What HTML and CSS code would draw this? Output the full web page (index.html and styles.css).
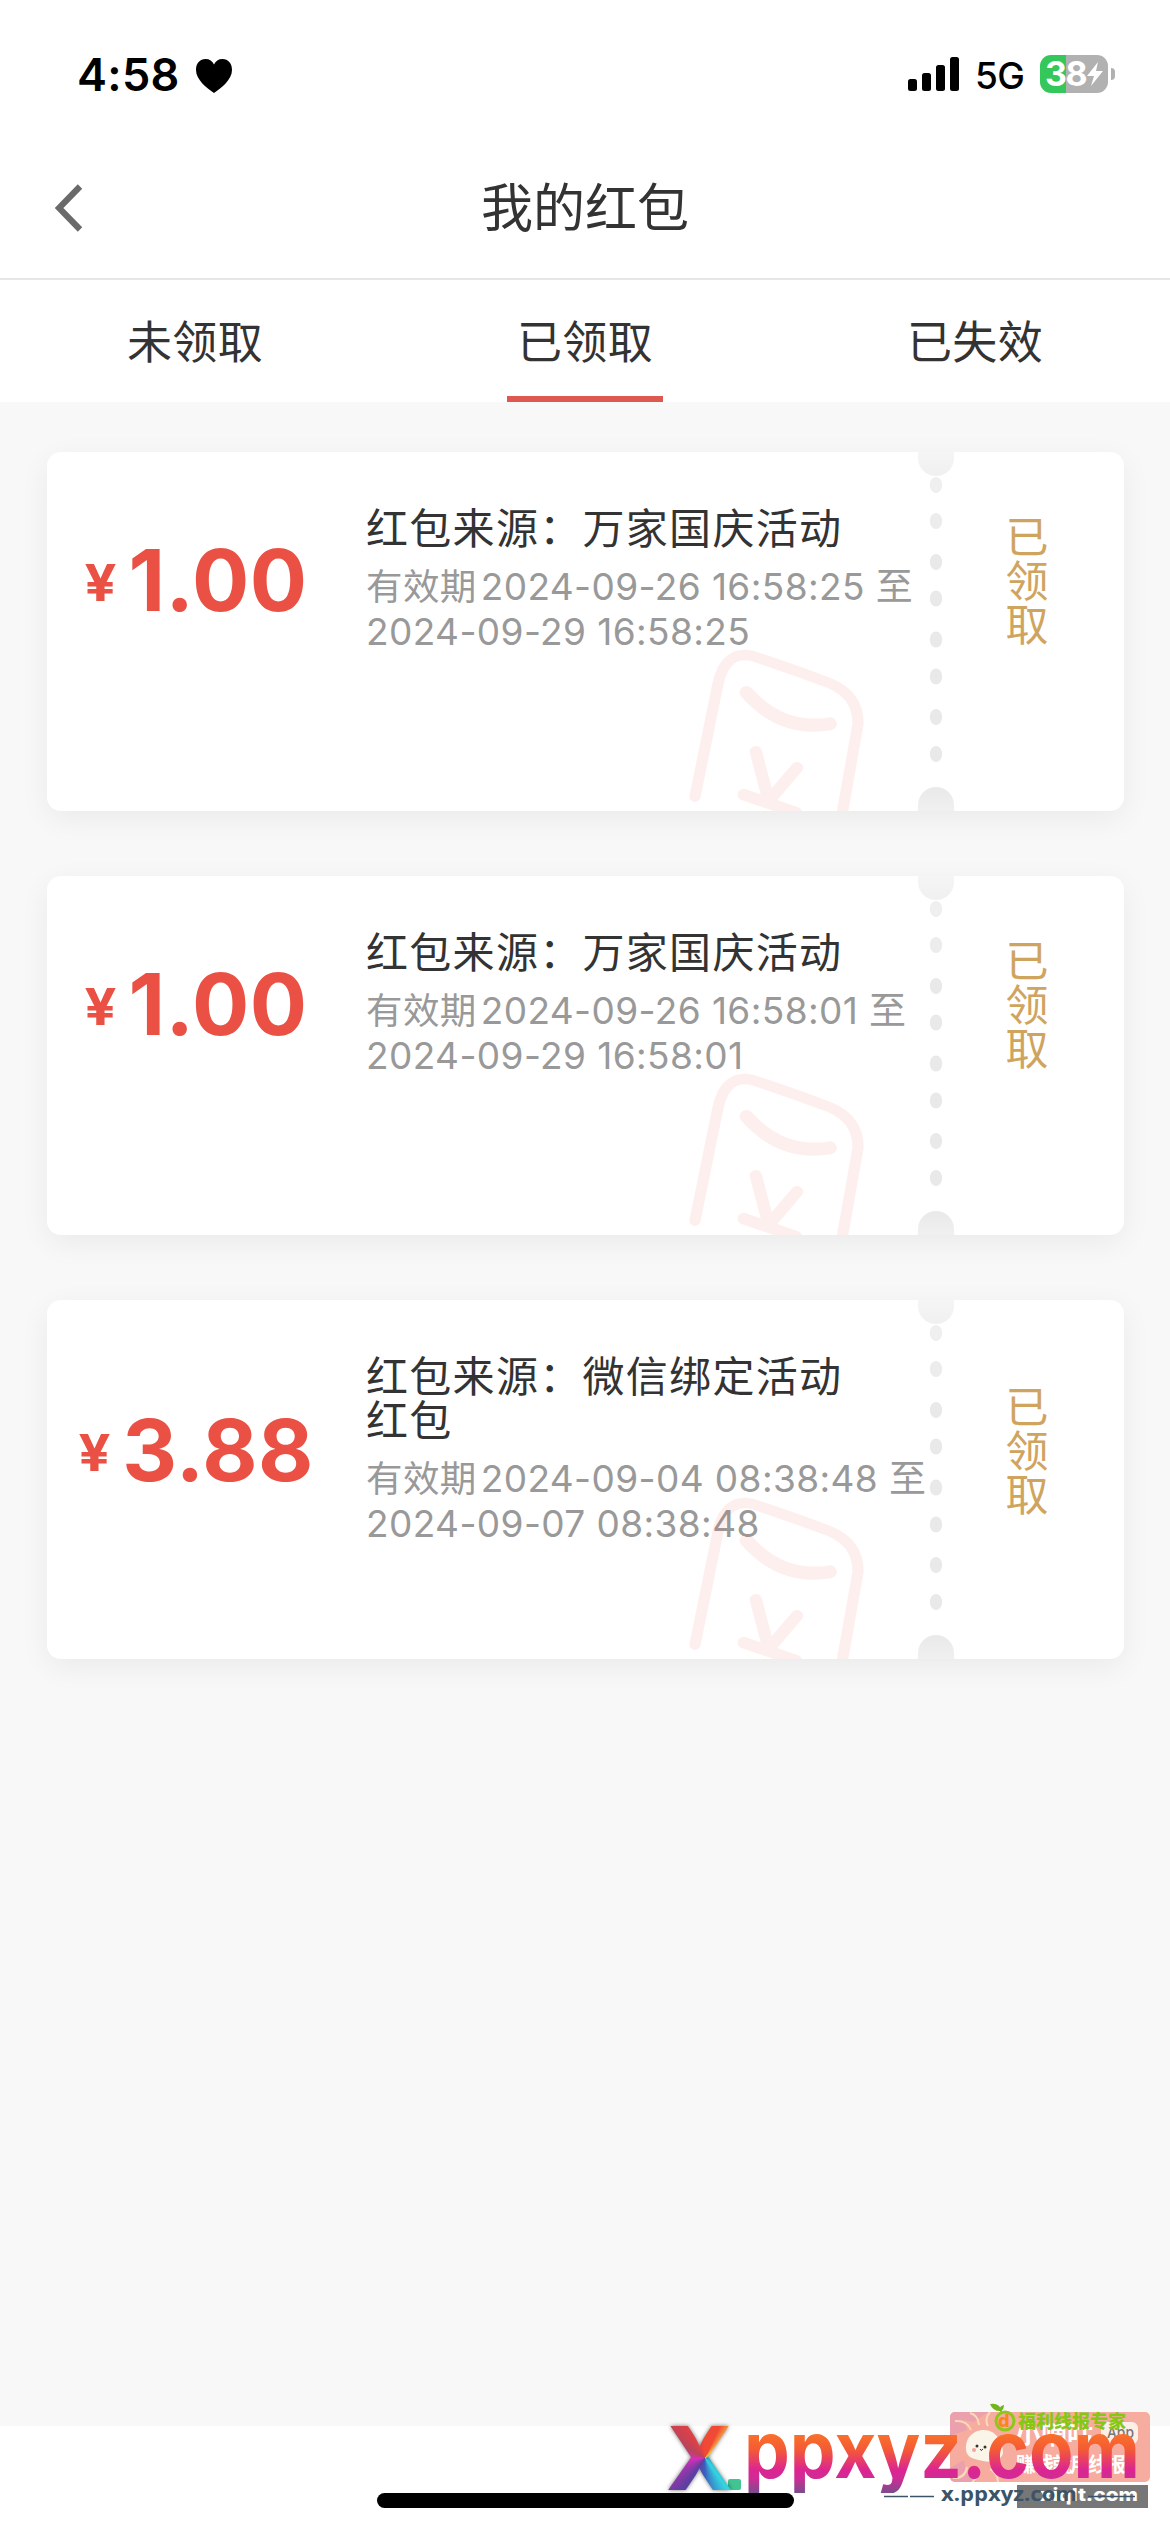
FILE: index.html
```html
<!DOCTYPE html>
<html lang="zh-CN">
<head>
<meta charset="utf-8">
<title>我的红包</title>
<link rel="stylesheet" href="styles.css">
</head>
<body>
<svg class="defs" width="0" height="0" aria-hidden="true">
  <symbol id="packet" viewBox="240 640 500 501" preserveAspectRatio="none">
    <g fill="none" stroke="#f25a4a" stroke-linecap="round" stroke-linejoin="round">
      <path d="M262 1098L325 762Q345 662 418 678Q540 722 632 760Q710 795 710 880L666 1150" stroke-width="31"/>
      <path d="M404 788Q500 905 632 881" stroke-width="39"/>
      <path d="M429 964L460 1092M542 1012L476 1096M396 1092L540 1146" stroke-width="34"/>
    </g>
  </symbol>
  <symbol id="dots" viewBox="0 0 14 290">
    <g fill="#e9e9e9">
      <ellipse cx="7" cy="10" rx="6.2" ry="8" fill="#efefef"/>
      <ellipse cx="7" cy="46" rx="6.2" ry="8" fill="#ececec"/>
      <ellipse cx="7" cy="87" rx="6.2" ry="8"/>
      <ellipse cx="7" cy="123.500" rx="6.2" ry="8"/>
      <ellipse cx="7" cy="164.500" rx="6.2" ry="8"/>
      <ellipse cx="7" cy="201.500" rx="6.2" ry="8"/>
      <ellipse cx="7" cy="242" rx="6.2" ry="8"/>
      <ellipse cx="7" cy="279" rx="6.2" ry="8"/>
    </g>
  </symbol>
</svg>

<header class="status">
  <div class="clock"><span class="time">4:58</span>
    <svg class="heart" viewBox="0 0 38 35"><path d="M19 35C12 30 1 22 1 12C1 5 5 1 10.500 1C14.500 1 17.500 3 19 6.500C20.500 3 23.500 1 27.500 1C33 1 37 5 37 12C37 22 26 30 19 35Z"/></svg>
  </div>
  <div class="signals">
    <svg class="bars" viewBox="0 0 52 35"><rect x="0" y="22" width="9" height="12" rx="2.500"/><rect x="14" y="16" width="9" height="18" rx="2.500"/><rect x="28" y="8" width="9" height="26" rx="2.500"/><rect x="42" y="0" width="9" height="34" rx="2.500"/></svg>
    <span class="net">5G</span>
    <div class="battery"><span class="level">38</span>
      <svg class="bolt" viewBox="0 0 18 26"><path fill="#fff" d="M12 1L1 15H8L5 25L17 10H10Z"/></svg>
    </div>
    <span class="nub"></span>
  </div>
</header>

<div class="navbar">
  <svg class="back" viewBox="0 0 28 48"><path d="M25 2.500L4 24L25 45.500" fill="none" stroke="#6a6a6a" stroke-width="6.2"/></svg>
  <h1 class="title">我的红包</h1>
</div>

<nav class="tabs">
  <span class="tab">未领取</span>
  <span class="tab active">已领取</span>
  <span class="tab">已失效</span>
</nav>

<main class="list">
  <article class="card">
    <div class="row">
      <div class="amount"><span class="yen">¥</span><span class="value">1.00</span></div>
      <div class="info">
        <div class="source">红包来源：万家国庆活动</div>
        <div class="dates"><span class="label">有效期</span>2024-09-26 16:58:25 至<br>2024-09-29 16:58:25</div>
      </div>
      <div class="state">已领取</div>
    </div>
    <svg class="packet"><use href="#packet"/></svg>
    <svg class="dots"><use href="#dots"/></svg>
    <i class="notch top"></i><i class="notch bottom"></i>
  </article>

  <article class="card">
    <div class="row">
      <div class="amount"><span class="yen">¥</span><span class="value">1.00</span></div>
      <div class="info">
        <div class="source">红包来源：万家国庆活动</div>
        <div class="dates"><span class="label">有效期</span>2024-09-26 16:58:01 至<br>2024-09-29 16:58:01</div>
      </div>
      <div class="state">已领取</div>
    </div>
    <svg class="packet"><use href="#packet"/></svg>
    <svg class="dots"><use href="#dots"/></svg>
    <i class="notch top"></i><i class="notch bottom"></i>
  </article>

  <article class="card">
    <div class="row">
      <div class="amount"><span class="yen">¥</span><span class="value">3.88</span></div>
      <div class="info">
        <div class="source">红包来源：微信绑定活动<br>红包</div>
        <div class="dates"><span class="label">有效期</span>2024-09-04 08:38:48 至<br>2024-09-07 08:38:48</div>
      </div>
      <div class="state">已领取</div>
    </div>
    <svg class="packet"><use href="#packet"/></svg>
    <svg class="dots"><use href="#dots"/></svg>
    <i class="notch top"></i><i class="notch bottom"></i>
  </article>
</main>

<footer class="home"><span class="home-bar"></span></footer>

<div class="stamp">
  <svg class="stamp-art" viewBox="650 2390 520 142">
    <defs>
      <linearGradient id="warm" gradientUnits="userSpaceOnUse" x1="0" y1="2435" x2="0" y2="2493">
        <stop offset="0" stop-color="#f9702b"/><stop offset=".25" stop-color="#f45a35"/><stop offset=".6" stop-color="#dc2592"/><stop offset=".75" stop-color="#cf2c95"/><stop offset="1" stop-color="#7a4c8e"/>
      </linearGradient>
      <clipPath id="badge"><rect x="950" y="2412" width="200" height="70" rx="5"/></clipPath>
      <clipPath id="word"><rect x="740" y="2425" width="410" height="68"/></clipPath>
    </defs>
    <g clip-path="url(#badge)">
      <rect x="950" y="2412" width="200" height="70" fill="#f7aca0"/>
      <path d="M950 2412h38l-14 10l-10-2l3 10l-17 6zM950 2482v-14l14-8l2 12l12-4l-2 14z" fill="#eba0ad"/>
      <path d="M955 2421q12-1 16 9M970 2413q8 2 9 12M990 2412q-6 7-2 14M953 2478q12 1 14-11M972 2482q7-4 5-13M998 2482q0-8-8-13" stroke="#fbd9b9" stroke-width="2" fill="none"/>
      <path d="M966 2450C965 2437 974 2430 984 2430C996 2430 1003 2442 1003 2453C1001 2461 992 2463 983 2461C974 2459 967 2458 966 2450Z" fill="#fbf5e9"/>
      <circle cx="977" cy="2446" r="1.500" fill="#333"/><circle cx="985" cy="2447" r="1.500" fill="#333"/><circle cx="974" cy="2450" r="2" fill="#f5a39c"/><path d="M980 2449q1 3 3 0" stroke="#333" fill="none"/>
    </g>
    <text class="cn" x="1015" y="2444" font-size="26" textLength="78" lengthAdjust="spacingAndGlyphs">小嘀咕</text>
    <rect x="1101" y="2422" width="37" height="22" rx="6" fill="#fdeee6"/>
    <text class="app" x="1107" y="2438" textLength="27" lengthAdjust="spacingAndGlyphs">App</text>
    <text class="cn" x="1016" y="2472" font-size="20" textLength="110">赚钱就用线报</text>
    <circle cx="1005" cy="2421" r="9" fill="none" stroke="#8bc81a" stroke-width="3"/>
    <text class="dee" x="998" y="2427">d</text>
    <path d="M990 2404Q999 2402 1002 2411Q993 2412 990 2404ZM1000 2410Q999 2406 1004 2405Q1004 2410 1000 2412Z" fill="#74b51c"/>
    <text class="expert" x="1018" y="2428" textLength="108" lengthAdjust="spacingAndGlyphs">福利线报专家</text>
    <rect x="1017" y="2485" width="131" height="23" fill="#777"/>
    <g clip-path="url(#word)"><text class="word" x="744" y="2478" textLength="396" lengthAdjust="spacingAndGlyphs" fill="url(#warm)">ppxyz.com</text></g>
    <text class="site" x="1040" y="2501" textLength="98" lengthAdjust="spacingAndGlyphs">xiqlt.com</text>
    <text class="sub" x="941" y="2501" textLength="136" lengthAdjust="spacingAndGlyphs">x.ppxyz.com</text>
    <path d="M884 2496.500h24m2 0h24M1088 2496.500h47" stroke="#3c5368" stroke-width="1.500"/>
    <rect x="728" y="2479" width="13" height="11" rx="2" fill="#40c493"/>
  </svg>
  <span class="big-x">X</span>
</div>
</body>
</html>
```

FILE: styles.css
```css
* { box-sizing: border-box; }
body {
  margin: 0; width: 1170px; height: 2532px; overflow: hidden; position: relative;
  display: flex; flex-direction: column; background: #fff;
  font-family: Inter, "Noto Sans CJK SC", sans-serif; color: #333;
}
.defs { position: absolute; }

.status { height: 144px; flex: none; display: flex; justify-content: space-between; padding: 55px 55px 0 77px; color: #000; }
.clock { display: flex; height: 40px; align-items: center; gap: 15px; }
.time { font-size: 45px; font-weight: 600; line-height: 40px; width: 103px; white-space: nowrap; letter-spacing: .3px; }
.heart { width: 38px; height: 35px; }
.signals { display: flex; height: 38px; align-items: center; }
.bars { width: 52px; height: 35px; }
.net { font-size: 37px; font-weight: 500; line-height: 38px; width: 65px; margin: 3px 0 0 15px; letter-spacing: -.5px; }
.battery {
  width: 68px; height: 38px; border-radius: 11px; display: flex; align-items: center; padding-left: 5px; gap: 1px;
  background: linear-gradient(90deg, #34c759 26px, #b1b1b1 26px);
}
.level { color: #fff; font-size: 34px; font-weight: 700; line-height: 38px; width: 40px; letter-spacing: -1.5px; }
.bolt { width: 18px; height: 26px; }
.nub { width: 4px; height: 12px; margin-left: 3px; background: #b1b1b1; border-radius: 0 4px 4px 0; }

.navbar { height: 136px; flex: none; display: flex; align-items: center; padding: 0 56px 6px 55px; border-bottom: 2px solid #e6e6e6; }
.back { width: 28px; height: 48px; }
.title { flex: 1; margin: 1px 27px 0 0; text-align: center; font-size: 52px; line-height: 60px; font-weight: 400; }

.tabs { height: 122px; flex: none; display: flex; }
.tab { flex: 1; text-align: center; font-size: 45px; letter-spacing: .3px; line-height: 125px; display: flex; flex-direction: column; align-items: center; }
.tab.active::after { content: ""; width: 156px; height: 6px; margin-top: -9px; background: #dd5850; }

.list { flex: 1; background: #f8f8f8; padding: 50px 46px 0 47px; display: flex; flex-direction: column; gap: 65px; }
.card { position: relative; height: 359px; background: #fff; border-radius: 14px; box-shadow: 0 8px 30px rgba(0, 0, 0, .06); }
.row { display: flex; align-items: center; padding-top: 55px; }
.amount { width: 319px; display: flex; align-items: center; justify-content: center; color: #ea5044; font-weight: 700; padding-right: 19px; }
.yen { font-size: 51px; line-height: 60px; margin: 4px 13px 0 0; transform: scaleX(1.1); }
.value { font-size: 85px; line-height: 100px; letter-spacing: .5px; }
.info { width: 568px; white-space: nowrap; }
.source { font-size: 42px; line-height: 44px; letter-spacing: 1.3px; margin-bottom: 14px; }
.dates { font-size: 37px; line-height: 44.500px; color: #999; letter-spacing: .4px; }
.label { font-size: 36.500px; margin-right: 4px; }
.state { margin-left: 68px; width: 44px; writing-mode: vertical-rl; font-size: 43px; line-height: 44px; letter-spacing: 1px; color: #cfa45f; }

.packet { position: absolute; left: 640px; top: 191px; width: 182px; height: 168px; opacity: .09; }
.dots { position: absolute; left: 882px; top: 23px; width: 14px; height: 290px; }
.notch { position: absolute; left: 871px; width: 36px; height: 24px; }
.notch.top { top: 0; border-radius: 0 0 18px 18px; background: linear-gradient(#f5f5f5, #f0f0f0); }
.notch.bottom { bottom: 0; border-radius: 18px 18px 0 0; background: linear-gradient(#e9e9e9, #f0f0f0); }

.home { height: 106px; flex: none; display: flex; justify-content: center; padding-top: 67px; }
.home-bar { width: 417px; height: 15px; border-radius: 8px; background: #000; }

.stamp { position: absolute; left: 650px; top: 2390px; width: 520px; height: 142px; }
.stamp-art { display: block; width: 520px; height: 142px; }
.cn { fill: #fff; font-family: "Noto Sans CJK SC", sans-serif; font-weight: 700; }
.app { fill: #777; font: 500 15px Inter, sans-serif; }
.dee { fill: #f7861c; font: 800 18px Inter, sans-serif; }
.expert { fill: #85c714; font: 900 18px "Noto Sans CJK SC", sans-serif; }
.word { font: 700 79px Inter, sans-serif; }
.site { fill: #fff; font: 800 18px Inter, sans-serif; }
.sub { fill: #3c5368; font: 700 19px "Open Sans", sans-serif; }
.big-x {
  position: absolute; left: 16px; top: 36px; width: 66px; height: 64px; line-height: 64px; text-align: center;
  font-size: 88px; font-weight: 800; color: transparent; -webkit-background-clip: text; background-clip: text;
  background-image: conic-gradient(from 0deg at 39px 32px, #f04a35 0 25deg, #f7c63c 45deg, #2b9ab0 90deg, #35d3e0 145deg, #3a5fc0 180deg, #5c3fa0 215deg, #d72fb8 265deg, #b8455c 300deg, #d8404a 325deg, #f04a35 360deg);
  filter: drop-shadow(0 0 2px rgba(0, 0, 0, .55));
}
```
